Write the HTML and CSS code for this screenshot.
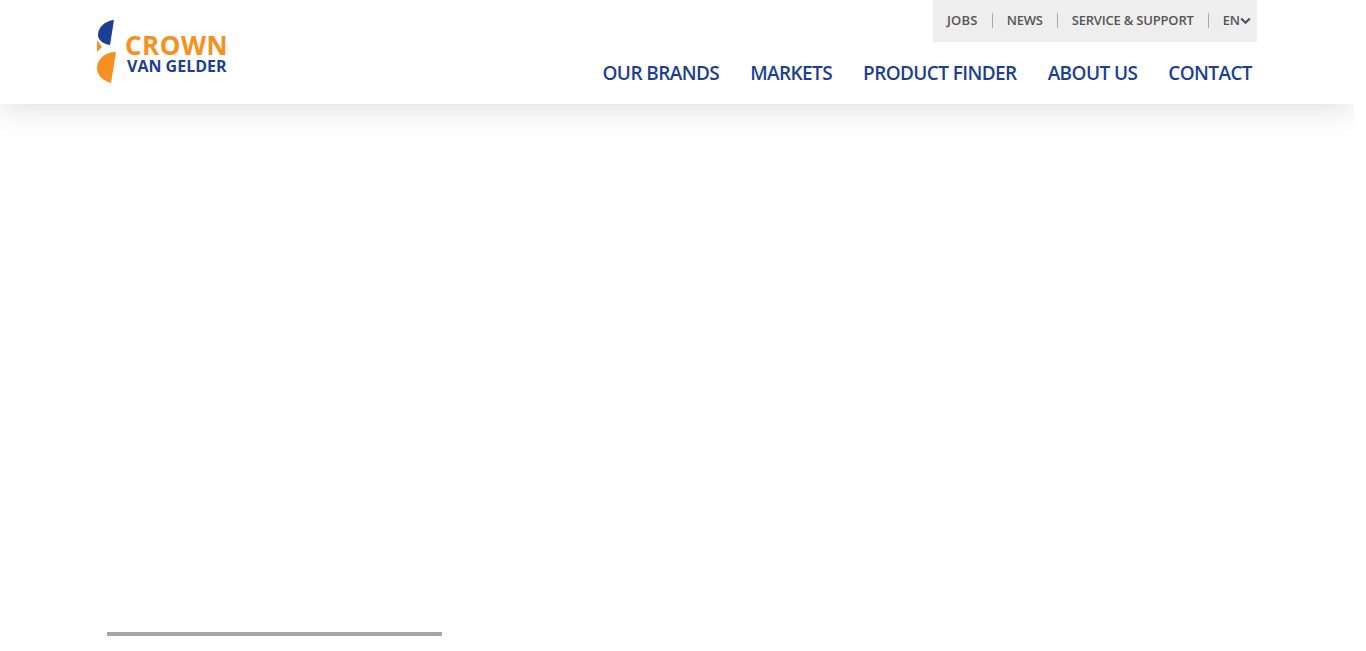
FILE: index.html
```html
<!DOCTYPE html>
<html lang="en">
<head>
    <meta charset="UTF-8">
    <meta name="viewport" content="width=device-width, initial-scale=1.0">
    <title>Crown Van Gelder</title>
    <link rel="stylesheet" href="styles.css">
</head>
<body>
    <div class="page">
        <header class="site-header">
            <div class="header-inner">
                <a class="logo" href="#">
                    <svg class="logo-mark" width="20" height="64" viewBox="0 0 20 64">
                        <path class="logo-blue" d="M17 0 C8 1 1 7 1 15 C1 20 6 24 13 25 Z"/>
                        <path class="logo-orange" d="M0 20 L5 27 L0 32 Z"/>
                        <path class="logo-orange" d="M19 32 C8 32 0 39 0 48 C0 55 6 61 14 63 Z"/>
                    </svg>
                    <span class="logo-text">
                        <span class="logo-crown">CROWN</span>
                        <span class="logo-vg">VAN GELDER</span>
                    </span>
                </a>
                <div class="header-right">
                    <nav class="top-nav">
                        <a href="#">JOBS</a>
                        <a href="#">NEWS</a>
                        <a href="#">SERVICE &amp; SUPPORT</a>
                        <a class="lang" href="#">EN<svg width="11" height="8" viewBox="0 0 11 8"><path d="M1.2 1.5 L5.5 5.8 L9.8 1.5" fill="none" stroke="#555" stroke-width="2.2"/></svg></a>
                    </nav>
                    <nav class="main-nav">
                        <a href="#">OUR BRANDS</a>
                        <a href="#">MARKETS</a>
                        <a href="#">PRODUCT FINDER</a>
                        <a href="#">ABOUT US</a>
                        <a href="#">CONTACT</a>
                    </nav>
                </div>
            </div>
        </header>
        <main class="content">
            <div class="progress"></div>
        </main>
    </div>
</body>
</html>
```

FILE: styles.css
```css
html, body {
    margin: 0;
    height: 100%;
    overflow: hidden;
    background: #fff;
    font-family: "Open Sans", sans-serif;
}
a {
    text-decoration: none;
}
.page {
    width: 1354px;
    height: 651px;
    overflow: hidden;
    display: flex;
    flex-direction: column;
}
.site-header {
    height: 104px;
    flex: none;
    background: #fff;
    box-shadow: 0 5px 30px rgba(0, 0, 0, 0.13);
}
.header-inner {
    width: 1160px;
    margin: 0 auto;
    display: flex;
    justify-content: space-between;
}
.logo {
    display: flex;
    align-items: flex-start;
    padding-top: 20px;
}
.logo-text {
    display: flex;
    flex-direction: column;
    margin: 12px 0 0 8px;
}
.logo-crown {
    font-size: 26px;
    line-height: 26px;
    font-weight: 700;
    color: #f7901e;
    letter-spacing: 0.5px;
}
.logo-vg {
    font-size: 16px;
    line-height: 15px;
    font-weight: 700;
    color: #1c3f94;
    margin: 1px 0 0 2px;
}
.logo-blue {
    fill: #1c3f94;
}
.logo-orange {
    fill: #f7901e;
}
.header-right {
    display: flex;
    flex-direction: column;
    align-items: flex-end;
}
.top-nav {
    height: 42px;
    width: 324px;
    box-sizing: border-box;
    background: #eee;
    display: flex;
    align-items: center;
    padding: 0 0 1px 14px;
    white-space: nowrap;
}
.top-nav a {
    font-size: 13px;
    font-weight: 600;
    color: #555;
    line-height: 15px;
    letter-spacing: -0.2px;
    padding-right: 14px;
    margin-right: 14px;
    border-right: 1px solid #aaa;
}
.top-nav a:first-child {
    letter-spacing: 0.2px;
}
.top-nav a.lang {
    border-right: 0;
    padding: 0;
    margin: 0;
    display: flex;
    align-items: center;
}
.main-nav {
    display: flex;
    gap: 31px;
    padding: 17px 5px 0 0;
}
.main-nav a {
    font-size: 19px;
    line-height: 28px;
    font-weight: 600;
    letter-spacing: -0.6px;
    color: #1c3f94;
}
.content {
    flex: 1;
    padding: 528px 0 0 107px;
}
.progress {
    width: 335px;
    height: 4px;
    background: #aaa4a4;
}
```
